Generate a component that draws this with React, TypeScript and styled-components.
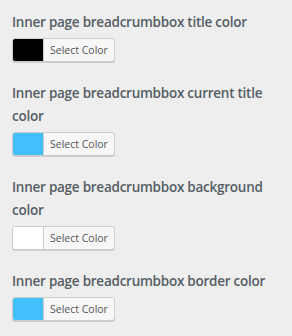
import styled, { createGlobalStyle } from 'styled-components'

const GlobalStyle = createGlobalStyle`
  html, body {
    margin: 0;
    padding: 0;
    background: #eeeeee;
  }
`

const Panel = styled.div`
  width: 292px;
  height: 336px;
  box-sizing: border-box;
  padding: 11px 12px 0 12px;
  background: #eeeeee;
  font-family: "Open Sans", "Liberation Sans", sans-serif;
`

const Control = styled.div`
  margin-bottom: 20px;
`

const Label = styled.div`
  font-size: 13.5px;
  font-weight: 600;
  letter-spacing: -0.25px;
  line-height: 23px;
  color: #555d66;
  margin-bottom: 4px;
`

const PickerButton = styled.button`
  display: flex;
  align-items: stretch;
  height: 24px;
  padding: 0;
  border: 1px solid #cccccc;
  border-radius: 3px;
  background: #f7f7f7;
  box-shadow: 0 1px 0 #cccccc;
  box-sizing: border-box;
  overflow: hidden;
  cursor: pointer;
`

const Swatch = styled.span<{ $color: string }>`
  width: 30px;
  background: ${p => p.$color};
  border-right: 1px solid #cccccc;
`

const ButtonText = styled.span`
  padding: 0 6px 0 6px;
  font-family: "Open Sans", "Liberation Sans", sans-serif;
  font-size: 10.5px;
  line-height: 22px;
  color: #555555;
`

const fields = [
  { label: 'Inner page breadcrumbbox title color', color: '#000000' },
  { label: 'Inner page breadcrumbbox current title color', color: '#42c0fb' },
  { label: 'Inner page breadcrumbbox background color', color: '#ffffff' },
  { label: 'Inner page breadcrumbbox border color', color: '#42c0fb' },
]

const App = () => {
  return (
    <Panel>
      <GlobalStyle />
      {fields.map(f => (
        <Control key={f.label}>
          <Label>{f.label}</Label>
          <PickerButton type="button">
            <Swatch $color={f.color} />
            <ButtonText>Select Color</ButtonText>
          </PickerButton>
        </Control>
      ))}
    </Panel>
  )
}

export default App
